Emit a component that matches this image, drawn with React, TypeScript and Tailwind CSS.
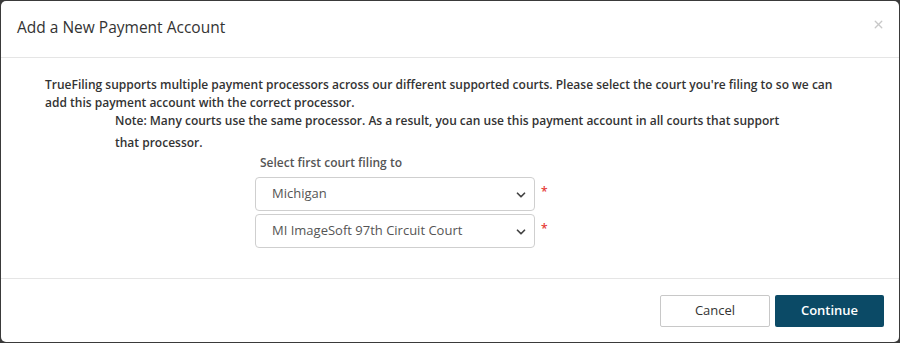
import { ChevronDown, X } from 'lucide-react';

const font = { fontFamily: '"Open Sans", "Noto Sans", sans-serif' };

function CourtSelect({ value }: { value: string }) {
  return (
    <div className="flex items-center gap-[6px]">
      <div className="relative w-[280px] h-[34px] rounded-[4px] border border-[#cfcfcf] bg-white flex items-center pl-[16px] text-[13px] font-normal text-[#555]">
        <span>{value}</span>
        <ChevronDown size={14} strokeWidth={3} className="absolute right-[6px] top-[10px] text-[#444]" />
      </div>
      <span className="text-[#e53935] text-[12px] leading-none -mt-[4px]">*</span>
    </div>
  );
}

export default function App() {
  return (
    <div className="w-[900px] h-[343px] bg-[#3a3a3a] p-px" style={font}>
      <div className="w-full h-full bg-white rounded-[5px] flex flex-col">
        {/* Header */}
        <div className="h-[57px] border-b border-[#e5e5e5] flex items-center justify-between pl-[16px] pr-[14px]">
          <h4 className="text-[15.5px] text-[#333] -mt-[2px]">Add a New Payment Account</h4>
          <X size={13} strokeWidth={2.5} className="text-[#c8c8c8] -mt-[9px]" />
        </div>

        {/* Body */}
        <div className="h-[221px] border-b border-[#e5e5e5] pt-[18px] text-[12px] font-semibold text-[#333]">
          <p className="pl-[44px] pr-[58px] leading-[18px]">
            TrueFiling supports multiple payment processors across our different supported courts. Please select the court you're filing to so we can add this payment account with the correct processor.
          </p>
          <p className="pl-[114px] pr-[100px] leading-[22px] -mt-[2px]">
            Note: Many courts use the same processor. As a result, you can use this payment account in all courts that support that processor.
          </p>
          <div className="pl-[254px] flex flex-col gap-[3px]">
            <div className="pl-[5px] text-[#555] leading-[18px] mb-[2px]">Select first court filing to</div>
            <CourtSelect value="Michigan" />
            <CourtSelect value="MI ImageSoft 97th Circuit Court" />
          </div>
        </div>

        {/* Footer */}
        <div className="flex-1 flex items-center justify-end gap-[5px] pr-[15px] pt-[1px]">
          <button className="w-[110px] h-[32px] border border-[#c8c8c8] rounded-[2px] bg-white text-[13px] text-[#333]">
            Cancel
          </button>
          <button className="w-[109px] h-[32px] rounded-[2px] bg-[#0b4a66] text-[13px] font-semibold text-white">
            Continue
          </button>
        </div>
      </div>
    </div>
  );
}
